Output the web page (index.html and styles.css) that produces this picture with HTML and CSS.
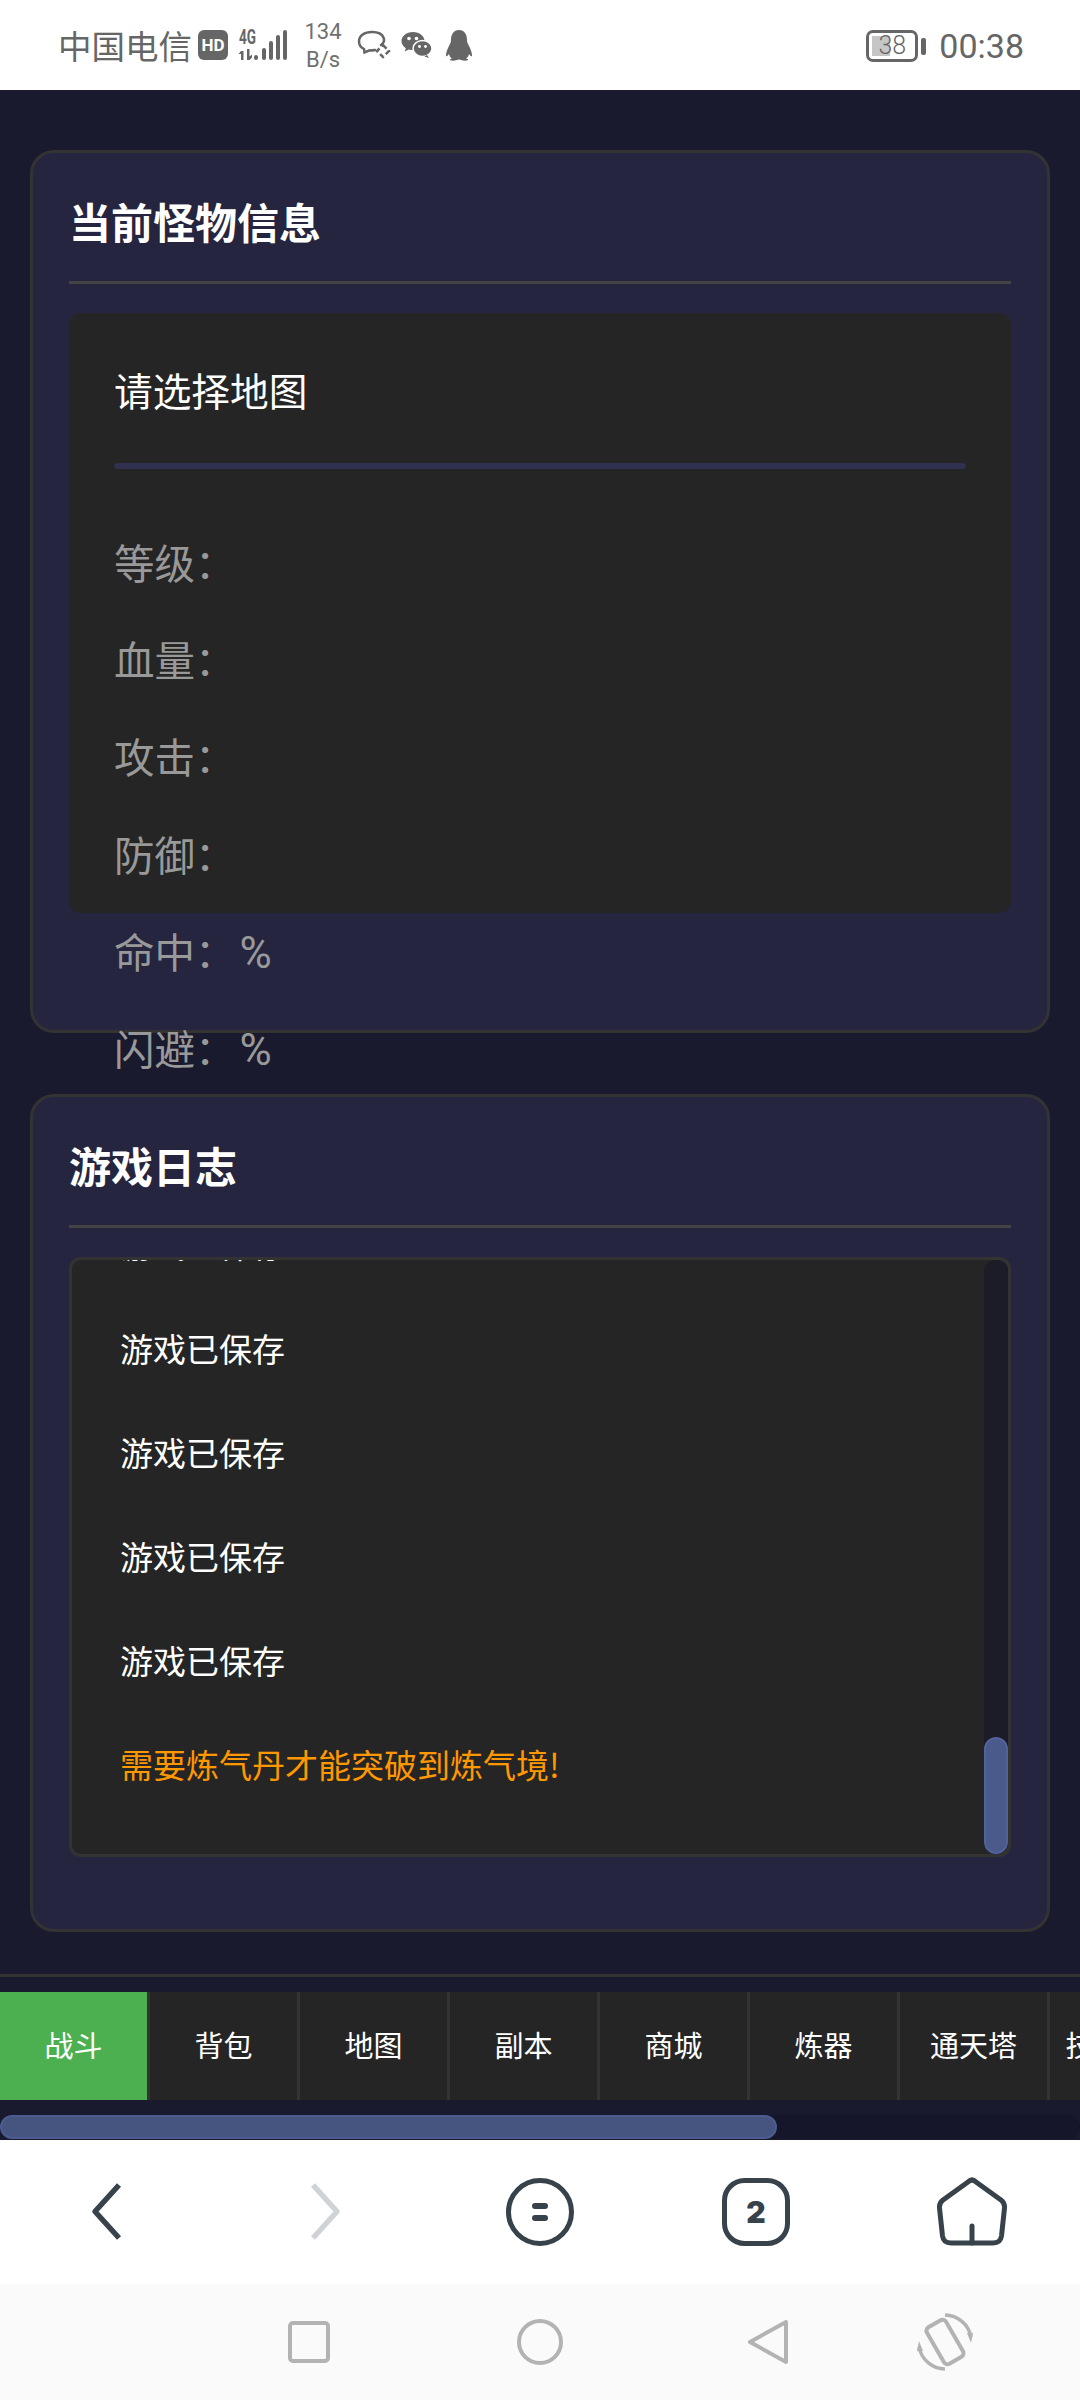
FILE: index.html
```html
<!DOCTYPE html>
<html lang="zh">
<head>
    <meta charset="UTF-8">
    <meta name="viewport" content="width=device-width, initial-scale=1.0">
    <title>游戏</title>
    <link rel="stylesheet" href="styles.css">
</head>
<body>
    <div class="status-bar">
        <div class="status-left">
            <span class="carrier">中国电信</span>
            <span class="hd-badge">HD</span>
            <svg class="icon-signal" width="52" height="34" viewBox="0 0 52 34">
                <text class="signal-text" x="2" y="16" textLength="17" lengthAdjust="spacingAndGlyphs">4G</text>
                <path d="M4 23h2.500v9H4zM1.500 26l2.500-3v3zM10 21h2.500v7.500l2.500-2v3l-2.500 2.500H10z" fill="#666"/>
                <rect x="17" y="27" width="4" height="5" rx="2" fill="#666"/>
                <rect x="25" y="20" width="4" height="12" rx="2" fill="#666"/>
                <rect x="32" y="13" width="4" height="19" rx="2" fill="#666"/>
                <rect x="39" y="7" width="4" height="25" rx="2" fill="#666"/>
                <rect x="46" y="2" width="4" height="30" rx="2" fill="#666"/>
            </svg>
            <div class="net-speed"><span>134</span><span>B/s</span></div>
            <svg class="icon-chat" width="34" height="30" viewBox="0 0 34 30">
                <path d="M24 15C27 13 27.500 10 26.500 7.500C25 3.500 20.500 2 15 2C7.500 2 2 5.500 2 11.500C2 15 4 17.500 7 19L7.500 22.500L12 20.500C14 20.500 16 20.500 18 20" fill="none" stroke="#666" stroke-width="2.500" stroke-linecap="round"/>
                <path d="M26 15l6 6-6 6-6-6z" fill="none" stroke="#666" stroke-width="2.500" stroke-dasharray="5 3"/>
            </svg>
            <svg class="icon-wechat" width="31" height="28" viewBox="0 0 31 28">
                <path d="M12 1C5.500 1 0.500 5 0.500 10C0.500 13 2.200 15.500 4.800 17.200L3.800 20.500L7.800 18.500C9.200 18.900 10.600 19.100 12 19.100C18.500 19.100 23.500 15 23.500 10C23.500 5 18.500 1 12 1Z" fill="#666"/>
                <ellipse cx="21.500" cy="17.500" rx="9.500" ry="8" fill="#666" stroke="#fff" stroke-width="1.500"/>
                <path d="M26 24l2 3-4.500-1.500z" fill="#666"/>
                <circle cx="8" cy="7.500" r="1.800" fill="#fff"/>
                <circle cx="15.500" cy="7.500" r="1.800" fill="#fff"/>
                <circle cx="18.500" cy="15.500" r="1.400" fill="#fff"/>
                <circle cx="24.500" cy="15.500" r="1.400" fill="#fff"/>
            </svg>
            <svg class="icon-qq" width="28" height="32" viewBox="0 0 28 32">
                <path d="M14 1C8.500 1 6 5.500 6 11C6 13 5.500 14 4 17C2 21 0.800 24 1 27C1.500 28 3 26.500 4 25C4.500 27 5.500 28.500 7 29.500C5 30 4 31 6 31.500C9 32 12 31 14 30.500C16 31 19 32 22 31.500C24 31 23 30 21 29.500C22.500 28.500 23.500 27 24 25C25 26.500 26.500 28 27 27C27.200 24 26 21 24 17C22.500 14 22 13 22 11C22 5.500 19.500 1 14 1Z" fill="#666"/>
            </svg>
        </div>
        <div class="status-right">
            <span class="battery">38</span>
            <span class="battery-cap"></span>
            <span class="clock">00:38</span>
        </div>
    </div>

    <div class="main">
        <div class="card card-monster">
            <h2 class="card-title">当前怪物信息</h2>
            <div class="monster-box">
                <div class="monster-name">请选择地图</div>
                <div class="monster-line"></div>
                <div class="stat">等级：</div>
                <div class="stat">血量：</div>
                <div class="stat">攻击：</div>
                <div class="stat">防御：</div>
                <div class="stat">命中：<span class="stat-value">%</span></div>
                <div class="stat">闪避：<span class="stat-value">%</span></div>
            </div>
        </div>

        <div class="card">
            <h2 class="card-title">游戏日志</h2>
            <div class="log">
                <div class="log-view">
                    <div class="log-list">
                        <div class="log-item">游戏已保存</div>
                        <div class="log-item">游戏已保存</div>
                        <div class="log-item">游戏已保存</div>
                        <div class="log-item">游戏已保存</div>
                        <div class="log-item">游戏已保存</div>
                        <div class="log-item log-warn">需要炼气丹才能突破到炼气境!</div>
                    </div>
                </div>
                <div class="log-track">
                    <div class="log-thumb"></div>
                </div>
            </div>
        </div>
    </div>

    <div class="tabs">
        <div class="tab active">战斗</div>
        <div class="tab">背包</div>
        <div class="tab">地图</div>
        <div class="tab">副本</div>
        <div class="tab">商城</div>
        <div class="tab">炼器</div>
        <div class="tab">通天塔</div>
        <div class="tab">技能修炼</div>
    </div>
    <div class="tabs-track">
        <div class="tabs-thumb"></div>
    </div>

    <div class="browser-bar">
        <svg width="72" height="72" viewBox="0 0 72 72">
            <path d="M47 9L23 35.500L47 62" fill="none" stroke="#37424a" stroke-width="5.500" stroke-linejoin="round"/>
        </svg>
        <svg width="72" height="72" viewBox="0 0 72 72">
            <path d="M25 9L49 35.500L25 62" fill="none" stroke="#d0d3d6" stroke-width="5.500" stroke-linejoin="round"/>
        </svg>
        <svg width="72" height="72" viewBox="0 0 72 72">
            <circle cx="36" cy="36" r="31.500" fill="none" stroke="#37424a" stroke-width="5"/>
            <rect x="28" y="27" width="16" height="6" rx="3" fill="#37424a"/>
            <rect x="28" y="39" width="16" height="6" rx="3" fill="#37424a"/>
        </svg>
        <svg width="72" height="72" viewBox="0 0 72 72">
            <rect x="4.500" y="4.500" width="63" height="63" rx="20" fill="none" stroke="#37424a" stroke-width="5"/>
            <text class="tab-count" x="36" y="47" text-anchor="middle">2</text>
        </svg>
        <svg width="72" height="72" viewBox="0 0 72 72">
            <path d="M32 6Q36 2 40 6L65 24Q69 27 68.500 32L65.500 60Q64.500 67 57 67L15 67Q7.500 67 6.500 60L3.500 32Q3 27 7 24Z" fill="none" stroke="#37424a" stroke-width="5" stroke-linejoin="round"/>
            <path d="M36 50V67" stroke="#37424a" stroke-width="5" stroke-linecap="round"/>
        </svg>
    </div>

    <div class="system-bar">
        <svg width="42" height="42" viewBox="0 0 42 42">
            <rect x="2" y="2" width="38" height="38" rx="3" fill="none" stroke="#b3b3b3" stroke-width="4"/>
        </svg>
        <svg width="46" height="46" viewBox="0 0 46 46">
            <circle cx="23" cy="23" r="21" fill="none" stroke="#b3b3b3" stroke-width="4"/>
        </svg>
        <svg class="icon-triangle" width="40" height="46" viewBox="0 0 40 46">
            <path d="M38 3V43L2 23Z" fill="none" stroke="#b3b3b3" stroke-width="4" stroke-linejoin="round"/>
        </svg>
        <svg class="icon-rotate" width="56" height="58" viewBox="0 0 56 58">
            <rect x="17" y="8" width="22" height="42" rx="4" transform="rotate(-30 28 29)" fill="none" stroke="#b3b3b3" stroke-width="4"/>
            <path d="M28 2A27 27 0 0 1 54 24" fill="none" stroke="#b3b3b3" stroke-width="3.500"/>
            <path d="M50 20h6l-2 10z" fill="#b3b3b3"/>
            <path d="M28 56A27 27 0 0 1 2 34" fill="none" stroke="#b3b3b3" stroke-width="3.500"/>
            <path d="M6 38H0l2-10z" fill="#b3b3b3"/>
        </svg>
    </div>
</body>
</html>
```

FILE: styles.css
```css
* {
    box-sizing: border-box;
}
body {
    font-family: "Noto Sans CJK SC", "Noto Sans", sans-serif;
    background-color: #1a1a2e;
    color: #fff;
    margin: 0;
    width: 1080px;
    height: 2400px;
    overflow: hidden;
    display: flex;
    flex-direction: column;
}

/* status bar */
.status-bar {
    height: 90px;
    flex: none;
    background-color: #fff;
    color: #666;
    display: flex;
    justify-content: space-between;
    align-items: center;
    padding: 0 56px 0 58px;
}
.status-left,
.status-right {
    display: flex;
    align-items: center;
}
.status-right {
    padding-top: 2px;
}
.carrier {
    font-size: 33.5px;
    line-height: 40px;
}
.hd-badge {
    width: 30px;
    height: 30px;
    margin-left: 6px;
    border-radius: 6px;
    background-color: #666;
    color: #fff;
    font-family: "Roboto", sans-serif;
    font-size: 17px;
    font-weight: 700;
    line-height: 30px;
    text-align: center;
}
.icon-signal {
    margin-left: 9px;
    overflow: visible;
}
.signal-text {
    font-family: "Roboto", sans-serif;
    font-size: 20px;
    font-weight: 700;
    fill: #666;
}
.net-speed {
    width: 40px;
    margin-left: 14px;
    padding-top: 2px;
    display: flex;
    flex-direction: column;
    align-items: center;
    font-family: "Roboto", sans-serif;
    font-size: 22px;
    line-height: 28px;
    color: #707070;
}
.icon-chat {
    margin-left: 14px;
}
.icon-wechat {
    margin-left: 10px;
}
.icon-qq {
    margin-left: 13px;
}
.battery {
    width: 52px;
    height: 32px;
    border: 3px solid #666;
    border-radius: 7px;
    background: linear-gradient(#c6c6c6, #c6c6c6) 3px 3px / 18px 20px no-repeat;
    font-family: "Roboto", sans-serif;
    font-size: 25px;
    font-weight: 300;
    line-height: 26px;
    text-align: center;
}
.battery-cap {
    width: 5px;
    height: 17px;
    margin-left: 3px;
    border-radius: 2px;
    background-color: #666;
}
.clock {
    margin-left: 13px;
    font-family: "Roboto", sans-serif;
    font-size: 34px;
    line-height: 40px;
}

/* cards */
.main {
    height: 1884px;
    flex: none;
    padding: 60px 30px 0;
}
.card {
    background-color: #252540;
    border: 3px solid #333;
    border-radius: 24px;
    padding: 38px 36px 72px;
}
.card-monster {
    margin-bottom: 61px;
}
.card-title {
    margin: 0 0 29px;
    padding-bottom: 30px;
    border-bottom: 3px solid #444;
    font-size: 42px;
    font-weight: 700;
    line-height: 60px;
}
.monster-box {
    height: 600px;
    margin-bottom: 45px;
    padding: 42px 45px 0;
    background-color: #252525;
    border-radius: 12px;
}
.monster-name {
    font-size: 38.7px;
    line-height: 68px;
}
.monster-line {
    height: 6px;
    margin: 40px 0 44px;
    border-radius: 3px;
    background-color: #303050;
}
.stat {
    height: 97.2px;
    color: #999;
    font-size: 40.5px;
    line-height: 97.2px;
}
.stat-value {
    margin-left: 4px;
    font-family: "Roboto", sans-serif;
    font-size: 44px;
    line-height: 0;
}

/* log */
.log {
    height: 600px;
    border: 3px solid #333;
    border-radius: 12px;
    background-color: #252525;
    display: flex;
    overflow: hidden;
}
.log-view {
    flex: 1;
    display: flex;
    flex-direction: column-reverse;
    overflow: hidden;
}
.log-list {
    flex: none;
    padding: 0 48px 38px;
}
.log-item {
    font-size: 33px;
    line-height: 104px;
}
.log-warn {
    color: #ff9800;
}
.log-track {
    width: 24px;
    flex: none;
    display: flex;
    align-items: flex-end;
    background-color: #1c1c28;
    border-radius: 12px;
}
.log-thumb {
    width: 100%;
    height: 117px;
    background-color: #4a5a8a;
    border: 2px solid #52629a;
    border-radius: 12px;
}

/* tabs */
.tabs {
    height: 126px;
    flex: none;
    padding-top: 15px;
    border-top: 3px solid #333;
    display: flex;
    overflow: hidden;
}
.tab {
    flex: none;
    width: 150px;
    height: 108px;
    background-color: #252525;
    border-right: 3px solid #333;
    font-size: 29px;
    line-height: 105px;
    text-align: center;
    white-space: nowrap;
}
.tab.active {
    background-color: #4caf50;
}
.tabs-track {
    height: 24px;
    flex: none;
    margin: 15px 0 1px;
    background-color: #16162a;
    border-radius: 12px;
}
.tabs-thumb {
    width: 777px;
    height: 100%;
    background-color: #465580;
    border: 2px solid #4c5c90;
    border-radius: 12px;
}

/* browser toolbar */
.browser-bar {
    height: 144px;
    flex: none;
    background-color: #fff;
    display: grid;
    grid-template-columns: repeat(5, 1fr);
    justify-items: center;
    align-items: center;
}
.tab-count {
    font-family: "Inter", sans-serif;
    font-size: 30px;
    font-weight: 900;
    fill: #37424a;
}

/* system navigation */
.system-bar {
    flex: 1;
    background-color: #fafafa;
    display: flex;
    align-items: center;
    gap: 187px;
    padding-left: 288px;
}
.icon-triangle {
    margin-left: -2px;
}
.icon-rotate {
    margin-left: -58px;
}
```
